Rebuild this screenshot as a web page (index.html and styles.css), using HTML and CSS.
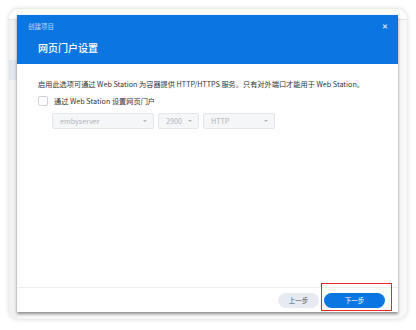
FILE: index.html
```html
<!DOCTYPE html>
<html lang="zh-CN">
<head>
  <meta charset="UTF-8"/>
  <title>创建项目</title>
  <link rel="stylesheet" href="styles.css">
</head>
<body>
<div class="window">
  <div class="topbar"></div>
  <div class="app">
    <div class="sidebar">
      <div class="side_item"></div>
      <div class="side_item active"></div>
    </div>
  </div>

  <div class="dialog">
    <div class="dialog_head">
      <div class="head_row">
        <span class="head_small">创建项目</span>
        <span class="close">&#x2715;</span>
      </div>
      <h1 class="head_title">网页门户设置</h1>
    </div>

    <div class="dialog_body">
      <p class="desc">启用此选项可通过 Web Station 为容器提供 HTTP/HTTPS 服务。只有对外端口才能用于 Web Station。</p>
      <label class="check_row">
        <span class="check"></span>
        <span>通过 Web Station 设置网页门户</span>
      </label>
      <div class="select_row">
        <div class="select select_name"><span>embyserver</span><i class="arrow"></i></div>
        <div class="select select_port"><span>2900</span><i class="arrow"></i></div>
        <div class="select select_proto"><span>HTTP</span><i class="arrow"></i></div>
      </div>
    </div>

    <div class="dialog_foot">
      <button class="btn btn_prev">上一步</button>
      <button class="btn btn_next">下一步</button>
    </div>
    <div class="highlight"></div>
  </div>
</div>
</body>
</html>
```

FILE: styles.css
```css
body {
    margin: 0;
    background: #fff;
    font-family: "Noto Sans CJK SC", "Noto Sans", sans-serif;
}

.window {
    position: relative;
    width: 398px;
    height: 310px;
    margin: 9px;
    border-radius: 10px;
    background: #f8f8f8;
    box-shadow: 0 0 5px rgba(0, 0, 0, 0.18);
    overflow: hidden;
}

.topbar {
    height: 10px;
    background: #fdfdfd;
    border-bottom: 1px solid #e4e4e4;
}

.app {
    display: flex;
    height: 299px;
}

.sidebar {
    width: 8px;
    background: #f2f2f2;
    padding-top: 30px;
}

.side_item {
    height: 10px;
}

.side_item.active {
    height: 20px;
    background: #e1e7ef;
}

.dialog {
    position: absolute;
    left: 8px;
    top: 6px;
    width: 381px;
    height: 297px;
    background: #fff;
    box-shadow: 0 2px 3px rgba(0, 0, 0, 0.45);
    display: flex;
    flex-direction: column;
}

.dialog_head {
    height: 49px;
    background: #0b76e1;
    color: #fff;
    box-sizing: border-box;
    padding: 6px 10px 0 11px;
}

.head_row {
    display: flex;
    justify-content: space-between;
    align-items: center;
    height: 10px;
}

.head_small {
    font-size: 6.5px;
    color: rgba(255, 255, 255, 0.72);
}

.close {
    font-size: 7px;
    font-weight: bold;
    color: rgba(255, 255, 255, 0.8);
}

.head_title {
    margin: 9px 0 0 10px;
    font-size: 10px;
    font-weight: 500;
    line-height: 16px;
}

.dialog_body {
    flex: 1;
    padding: 14px 21px 0;
    color: #333;
    font-size: 7.2px;
}

.desc {
    margin: 0;
    line-height: 12px;
    white-space: nowrap;
}

.check_row {
    display: flex;
    align-items: center;
    gap: 6px;
    margin-top: 5px;
    height: 12px;
}

.check {
    width: 8px;
    height: 8px;
    border: 1px solid #cfd3d8;
    border-radius: 2px;
}

.select_row {
    display: flex;
    gap: 4px;
    margin: 6px 0 0 14px;
}

.select {
    display: flex;
    align-items: center;
    justify-content: space-between;
    box-sizing: border-box;
    height: 16px;
    padding: 0 6px 0 7px;
    background: #f5f6f8;
    border: 1px solid #e3e6ea;
    border-radius: 2px;
    color: #aeb3ba;
}

.select_name {
    width: 102px;
}

.select_port {
    width: 41px;
}

.select_proto {
    width: 72px;
}

.arrow {
    width: 0;
    height: 0;
    border-left: 2px solid transparent;
    border-right: 2px solid transparent;
    border-top: 2px solid #b3b8bf;
}

.dialog_foot {
    height: 24px;
    border-top: 1px solid #eceef1;
    display: flex;
    justify-content: flex-end;
    align-items: center;
    gap: 5px;
    padding-right: 13px;
}

.btn {
    height: 15px;
    border: none;
    border-radius: 8px;
    font-family: inherit;
    font-size: 6.5px;
    padding: 0;
}

.btn_prev {
    width: 41px;
    background: #e7ebf1;
    color: #555;
}

.btn_next {
    width: 61px;
    background: #0b76e1;
    color: #fff;
}

.highlight {
    position: absolute;
    left: 304px;
    top: 268px;
    width: 71px;
    height: 28px;
    box-sizing: border-box;
    border: 1.5px solid #e8262b;
}
```
